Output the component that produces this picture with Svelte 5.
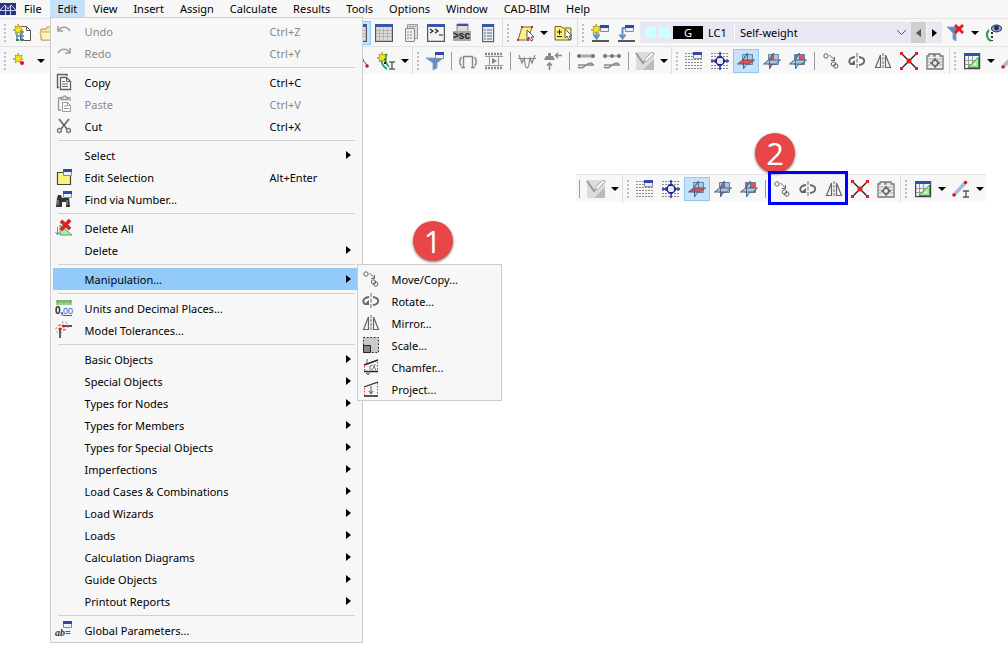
<script>
	const planes = (colors) =>
		`<path d="M5.500 2.500h10v10h-10z" fill="${colors[0]}" stroke="#5c86a6"/><path d="M6.500 7l4-6v10l-4 6z" fill="${colors[1]}" stroke="#4f7594"/><path d="M.500 12l5-4h12l-5 4z" fill="${colors[2]}" stroke="#4f6078"/><path d="M6.500 17V7l4-6" stroke="#4b6a80" fill="none"/>`;
	const blue = '#a9c9e2';
	const red = '#f04b50';
	const win = (x, y) =>
		`<path d="M${x}.5 ${y}.5h8v6h-8z" fill="#eef1f8" stroke="#8a8a94"/><path d="M${x} ${y}h9v3H${x}z" fill="#3346ac"/>`;
	const star = (x, y) =>
		`<g transform="translate(${x} ${y})"><path d="M5 0l1 3 3-1-1 3 2 1-3 1 1 3-3-2-3 2 1-3-3-1 3-1-1-3 3 1z" fill="#f7e51c" stroke="#a08d14" stroke-width=".7"/></g>`;
	const dots =
		'<path d="M0 1.500h18M0 4.500h18M0 7.500h18M0 10.500h18M0 13.500h18M0 16.500h18" stroke="#8a8a8a" stroke-dasharray="2 1"/>';

	const icons = {
		undo: '<path d="M3 4v5h5M3 9c3-5 9-5 12 0" stroke="#a0a0a0" stroke-width="1.6" fill="none"/>',
		redo: '<path d="M15 4v5h-5M15 9c-3-5-9-5-12 0" stroke="#a0a0a0" stroke-width="1.6" fill="none"/>',
		copy: '<path d="M12 3V1.500H2.500v13H4" fill="none" stroke="#606060" stroke-width="1.400"/><path d="M5.500 4.500h6l4 4v8h-10z" fill="#fff" stroke="#606060" stroke-width="1.300"/><path d="M11.500 4.500v4h4M7 8.500h3M7 11h6M7 13.500h6" stroke="#606060" fill="none"/>',
		paste: '<path d="M6 3H3.500v12H6M12 3h3v3M6 2.500h2c0-2 3-2 3 0h2v2H6z" fill="none" stroke="#999" stroke-width="1.300"/><path d="M7.500 7.500h5l3 3v6h-8z" fill="#fff" stroke="#999"/><path d="M12.500 7.500v3h3M9 11h3M9 13.500h5" stroke="#999" fill="none"/>',
		cut: '<path d="M4 2l8 10M14 2L6 12" stroke="#606060" stroke-width="1.500"/><circle cx="4.500" cy="13.500" r="2" fill="none" stroke="#777" stroke-width="1.400"/><circle cx="13.500" cy="13.500" r="2" fill="none" stroke="#777" stroke-width="1.400"/>',
		edit: `<path d="M2.500 4.500h13v12h-13z" fill="#fff27a" stroke="#484838" stroke-width="1.200"/>${win(8, 1)}`,
		find: `<path d="M3 5h3l1 3h3l1-1h3l1 10h-4v-5H7v5H1l1-9z" fill="#333"/><path d="M3 10v5M12 10v5" stroke="#a4b0b8"/>${win(8, 1)}`,
		deleteAll:
			'<path d="M5 6v10h12z" fill="#a8eca8" stroke="#5fa05f"/><path d="M2.500 8v7M.500 13l2 3 2-3" stroke="#718eb5" fill="none"/><path d="M6 2l9 8M15 1L6 11" stroke="#777" stroke-width="4"/><path d="M6 2l9 8M15 1L6 11" stroke="#f01818" stroke-width="2.800"/>',
		units: '<path d="M1 1h16v5H1z" fill="#91d17f"/><path d="M3 1v3M6 1v2M9 1v3M12 1v2M15 1v3" stroke="#437c3b"/><text x="0" y="15" font-size="10" font-weight="bold" font-family="Liberation Sans" fill="#222">0,</text><text x="8" y="15" font-size="9" font-family="Liberation Sans" fill="#2961d4">00</text><path d="M8 16.500h9" stroke="#2961d4"/>',
		tolerances:
			'<path d="M5 17V9M9 5h8" stroke="#222" stroke-width="1.400"/><circle cx="5" cy="8" r="4" fill="none" stroke="#777" stroke-dasharray="2 2"/><circle cx="9" cy="5" r="4" fill="none" stroke="#777" stroke-dasharray="2 2"/><circle cx="5" cy="8" r="1.600" fill="#e11"/><circle cx="8.500" cy="5" r="1.600" fill="#e11"/>',
		parameters: `${win(8, 0)}<text x="0" y="15" font-size="10" font-weight="bold" font-style="italic" font-family="Liberation Serif" fill="#333">ab=</text>`,
		move: '<circle cx="4" cy="4" r="2.200"/><circle cx="11.500" cy="12" r="2.200"/><circle cx="13.800" cy="14" r="2.200"/><path d="M7.500 3l5 5M12.500 5v3.500H9" />',
		rotate: '<path d="M9 1v16" stroke-dasharray="4 1.500"/><path d="M7 5C0 6 0 11 4 12.500M11 5c7 1 7 7 0 8" stroke-width="1.800"/><path d="M1.500 13H7V8z" fill="#666" stroke="none"/>',
		mirror: '<path d="M9 1v16" stroke-dasharray="3 1"/><path d="M6.500 3v12.500H1.500zM11.500 3v12.500h5z" stroke-width="1.200"/>',
		scale: '<path d="M1 1h16v16H1z" fill="#c9c9c9" stroke="none"/><path d="M1.500 1.500h15v15h-15z" stroke="#222" stroke-dasharray="1.500 2"/><path d="M1.500 9.500h7v7h-7z" fill="#888" stroke="#222"/>',
		chamfer: '<path d="M2 7l14-5M2 13.500h14" stroke="#222" stroke-width="1.400"/><path d="M2.500 8v5M15.500 4v9" stroke="#d33" stroke-dasharray="1.500 1.500"/><path d="M5 1v4M6 13v4M4 15l2 2 2-2M13 6c-2 8-6 6-5 3s3-3 6 3" stroke="#666"/>',
		project: '<path d="M2 7l14-5M2 16h14" stroke="#222" stroke-width="1.300"/><path d="M2.500 8v7M15.500 3v12" stroke="#d33" stroke-dasharray="1.500 1.500"/><path d="M9 6v8M7 11l2 3 2-3" stroke="#555"/>',
		newModel: `<path d="M7.500 2.500h6l4 4v10h-10z" fill="#fff" stroke="#555"/><path d="M13.500 2.500v4h4" fill="none" stroke="#555"/><path d="M4 7v10M9 7v10M3 8h8M3 12h8" stroke="#4d93bd" stroke-width="1.500"/><path d="M3 16h3M8 16h3" stroke="#2d8a4d" stroke-width="2"/>${star(0, 0)}`,
		open: '<path d="M2 16V5h5l1-2h9v13z" fill="#f7e9a5" stroke="#b59c4b"/><path d="M1 8h14l2 8H3z" fill="#fdf2bf" stroke="#c5ad62"/>',
		starDot: `${star(0, 1)}<circle cx="9" cy="11" r="2" fill="#e11"/>`,
		redDots: '<path d="M10 6l6 7" stroke="#555"/><circle cx="11" cy="8" r="1.800" fill="#e11"/><circle cx="16" cy="14" r="1.800" fill="#d11"/>',
		memberNew: `<path d="M4 4c0 6 2 11 6 13M10 2c-3 4-1 10 2 13" fill="none" stroke="#21a357" stroke-width="1.700"/><path d="M8 2v10" stroke="#222" stroke-width="2" stroke-dasharray="2 2"/>${star(0, 0)}<path d="M12 10h6M12 17h6M15 10v7" stroke="#666" stroke-width="1.500"/>`,
		table: '<path d="M.600.600h16.800v16.800H.600z" fill="#dedede" stroke="#555" stroke-width="1.200"/><path d="M0 0h18v3H0z" fill="#3b56a8"/><path d="M4.500 4v13M8.500 4v13M12.500 4v13M1 6.500h16M1 9.500h16M1 12.500h16" stroke="#b2b2b2"/>',
		sheet: '<path d="M6.500.500h10v14h-10z" fill="#ddd" stroke="#999"/><path d="M4.500 4.500h9v13h-9z" fill="#eee" stroke="#888"/><path d="M6 8h6M6 11h6M6 14h6M8 2.500h7" stroke="#888" stroke-dasharray="2 1"/>',
		console: '<path d="M.600.600h16.800v16.800H.600z" fill="#f3f3f3" stroke="#555" stroke-width="1.200"/><path d="M0 0h18v3H0z" fill="#3b56a8"/><path d="M3 5l3 2-3 2M8 5l3 2-3 2M12 11h4" fill="none" stroke="#222" stroke-width="1.200"/>',
		script: '<path d="M4 0h11v9H4z" fill="#ddd" stroke="#888"/><path d="M4 0h11v2H4z" fill="#3b56a8"/><path d="M0 7h18v10H0z" fill="#a6a6a6"/><text x="0" y="15" font-size="10" font-weight="bold" font-family="Liberation Sans" fill="#222">&gt;sc</text>',
		list: '<path d="M3.600.600h11v17h-11z" fill="#ececec" stroke="#666" stroke-width="1.200"/><path d="M3 0h12v3H3z" fill="#3b56a8"/><path d="M5 6h2M8 6h5M5 9h2M8 9h5M5 12h2M8 12h5M5 15h2M8 15h5" stroke="#476f9d"/>',
		surface: '<path d="M6 3h10l-4 13H2z" fill="#faf47c" stroke="#666"/><path d="M5 2h2v2H5zM15 2h2v2h-2zM1 15h2v2H1zM11 15h2v2h-2z" fill="#f01818"/><path d="M11 6v9l2-2 2 4 2-1-2-3h3z" fill="#fff" stroke="#555"/>',
		plusMinus: '<path d="M1 2.500h6l2 1.500h8v12H1z" fill="#fbef73" stroke="#6c682e"/><path d="M3 8h5M5.500 5.500v5M3 12.500h5" stroke="#222"/><path d="M11 5v9l2-2 2 4 2-1-2-3h3z" fill="#fff" stroke="#555"/>',
		loadNew: `<path d="M5.500 4v9M2.500 10.500l3 4 3-4" stroke="#5f92c8" stroke-width="2" fill="none"/><path d="M1 17h17" stroke="#222" stroke-width="1.500"/>${star(0, 0)}${win(9, 1)}`,
		load: `<path d="M5.500 4v9M2.500 10.500l3 4 3-4" stroke="#5f92c8" stroke-width="2" fill="none"/><path d="M5 4h4" stroke="#5f92c8" stroke-width="2"/><path d="M1 17h17" stroke="#222" stroke-width="1.500"/>${win(8, 1)}`,
		filterX: '<path d="M0 3h14l-5 6v8l-3-2V9z" fill="#5f88bf" stroke="#8aa3c3"/><path d="M8 1l8 8M16 1L8 9" stroke="#ef1515" stroke-width="2.800"/>',
		eye: '<path d="M4 6c-4 4-2 9 2 11" fill="none" stroke="#21a357" stroke-width="2"/><path d="M7 8v9" stroke="#333" stroke-width="2" stroke-dasharray="2 2"/><ellipse cx="11.500" cy="4.500" rx="5" ry="3.300" fill="#9ba9dd" stroke="#444" stroke-width="1.200"/><circle cx="11.500" cy="4" r="2.400" fill="#222c72"/>',
		filter: `<path d="M0 6h17l-6 5v5l-4 2v-7z" fill="#628dc6" stroke="#8ba7c8"/>${win(9, 0)}`,
		frame: '<path d="M4.500 16V4.500h9V16M2 15.500h4M12 15.500h4M2.500 5C0 8 1 12 2 14M15.500 5c2.500 3 1.500 7 .500 9" fill="none" stroke="#888" stroke-width="1.400"/>',
		film: '<path d="M0 2h18M0 16h18" stroke="#888" stroke-width="2.500" stroke-dasharray="2 1"/><path d="M0 4.500h18M0 13.500h18M4.500 4v10M13.500 4v10" stroke="#999"/><path d="M7 6l5 3-5 3z" fill="#888"/>',
		moment: '<path d="M0 6.500h18M1 3l3 8 2-5c1 5 1 10 3 10s2-5 3-10l2 5 3-8" fill="none" stroke="#888" stroke-width="1.200"/>',
		support: '<path d="M4 1h3v3h2l2 4H0l2-4h2z" fill="#888"/><path d="M12 3.500h6M14 1l-2.500 2.500L14 6M5.500 11v7M3 13.500L5.500 11 8 13.500" fill="none" stroke="#888" stroke-width="1.600"/>',
		beamA: '<path d="M1 4h16" stroke="#aaa" stroke-width="3"/><circle cx="2" cy="4" r="2" fill="#777"/><circle cx="16" cy="4" r="2" fill="#777"/><path d="M1 13h16M1 15c4 2 6 0 8-2s6-3 7 0" fill="none" stroke="#888" stroke-width="1.500"/>',
		beamB: '<path d="M1 4h16" stroke="#bbb" stroke-width="2"/><circle cx="2" cy="4" r="2" fill="#777"/><circle cx="9" cy="4" r="2" fill="#777"/><circle cx="16" cy="4" r="2" fill="#777"/><path d="M1 13h16M1 15c4 2 6 0 8-2s6-3 7 0" fill="none" stroke="#888" stroke-width="1.500"/>',
		check: '<path d="M0 0h18v18H0z" fill="#dcdcdc"/><path d="M18 7v11H7z" fill="#bbb"/><path d="M0 1l7 10L18 1" stroke="#999" stroke-width="2" fill="none"/><path d="M16 0l2 2-7 7-3 1 1-3z" fill="#f8f8f8" stroke="#aaa"/>',
		grid: `${dots}${win(8, 0)}`,
		snap: `${dots}<circle cx="9" cy="9" r="4" fill="#e8ecff" stroke="#141a8c" stroke-width="1.500"/><path d="M0 9h6M12 9h6M9 0v6M9 12v6" stroke="#141a8c" stroke-width="1.400"/>`,
		planeXY: planes([blue, blue, red]),
		planeXZ: planes([blue, red, blue]),
		planeYZ: planes([red, blue, blue]),
		cross: '<path d="M2 2l14 14M16 2L2 16" stroke="#222" stroke-width="1.400"/><circle cx="9" cy="9" r="2.500" fill="#f01818"/><path d="M0 0h3v3H0zM15 0h3v3h-3zM0 15h3v3H0zM15 15h3v3h-3z" fill="#f01818"/>',
		settings: '<path d="M1 4h2V2h5v2h1V2h5v2h3v13H1z" fill="#eee" stroke="#777" stroke-width="1.300"/><path d="M2 7h14M2 10h3M2 13h3M13 10h3M13 13h3" stroke="#aaa"/><circle cx="9" cy="11" r="2.800" fill="none" stroke="#666" stroke-width="1.700"/><path d="M9 6v2M9 14v2M4 11h2M12 11h2" stroke="#666" stroke-width="1.500"/>',
		tableGreen: '<path d="M1.600 1.600h15v15h-15z" fill="#f4f4f4" stroke="#444" stroke-width="1.200"/><path d="M1 1h16v3H1z" fill="#2855b0"/><path d="M5.500 4v12M9.500 4v12M2 8.500h14M2 12.500h14" stroke="#999"/><path d="M15.500 5v10.500H5z" fill="#98ef98" stroke="#4c8c4c"/><path d="M13 10.500v2.500h-2.500z" fill="#fff"/>',
		member: '<path d="M2 15L13 3" stroke="#a0bce0" stroke-width="3.500"/><circle cx="2" cy="15" r="1.800" fill="#e11"/><circle cx="13.500" cy="2.500" r="1.800" fill="#e11"/><path d="M11 11h6M11 17h6M14 11v6" stroke="#555" stroke-width="1.300"/>'
	};

	// toolbar entries: an icon name, or 'v' drop arrow, '|' line, '#' new group, '*' pressed button
	const coordTools = 'check v # grid snap *planeXY planeXZ planeYZ'.split(' ');
	const moveTools = ['move', 'rotate', 'mirror'];
	const tableTools = 'cross settings # tableGreen v member'.split(' ');

	const topTools =
		'*table table sheet console script list # surface v plusMinus # loadNew load'.split(' ');
	const lowTools =
		'redDots memberNew v # filter | frame film | moment support | beamA beamB |'.split(' ');

	const menus = [
		'File', 'Edit', 'View', 'Insert', 'Assign', 'Calculate',
		'Results', 'Tools', 'Options', 'Window', 'CAD-BIM', 'Help'
	];

	const submenu = [
		{ label: 'Move/Copy...', icon: 'move' },
		{ label: 'Rotate...', icon: 'rotate' },
		{ label: 'Mirror...', icon: 'mirror' },
		{ label: 'Scale...', icon: 'scale' },
		{ label: 'Chamfer...', icon: 'chamfer' },
		{ label: 'Project...', icon: 'project' }
	];

	const more = (label) => ({ label, more: true });
	const editMenu = [
		[
			{ label: 'Undo', icon: 'undo', keys: 'Ctrl+Z', off: true },
			{ label: 'Redo', icon: 'redo', keys: 'Ctrl+Y', off: true }
		],
		[
			{ label: 'Copy', icon: 'copy', keys: 'Ctrl+C' },
			{ label: 'Paste', icon: 'paste', keys: 'Ctrl+V', off: true },
			{ label: 'Cut', icon: 'cut', keys: 'Ctrl+X' }
		],
		[
			more('Select'),
			{ label: 'Edit Selection', icon: 'edit', keys: 'Alt+Enter' },
			{ label: 'Find via Number...', icon: 'find' }
		],
		[{ label: 'Delete All', icon: 'deleteAll' }, more('Delete')],
		[{ label: 'Manipulation...', more: true, items: submenu }],
		[
			{ label: 'Units and Decimal Places...', icon: 'units' },
			{ label: 'Model Tolerances...', icon: 'tolerances' }
		],
		[
			'Basic Objects', 'Special Objects', 'Types for Nodes', 'Types for Members',
			'Types for Special Objects', 'Imperfections', 'Load Cases & Combinations',
			'Load Wizards', 'Loads', 'Calculation Diagrams', 'Guide Objects', 'Printout Reports'
		].map(more),
		[{ label: 'Global Parameters...', icon: 'parameters' }]
	];

	let loadCase = $state('Self-weight');
</script>

{#snippet icon(name)}
	<svg class="icon" viewBox="0 0 18 18" fill="none" stroke={submenu.some((s) => s.icon === name) ? '#666' : 'none'}>
		{@html icons[name] ?? ''}
	</svg>
{/snippet}

{#snippet tools(list)}
	{#each list as item}
		{#if item === 'v'}
			<button class="drop" aria-label="More"><svg viewBox="0 0 8 4"><path d="M0 0h8L4 4z" /></svg></button>
		{:else if item === '|'}
			<span class="line"></span>
		{:else if item === '#'}
			<span class="group"></span>
		{:else}
			<button class="tool" class:on={item[0] === '*'} aria-label={item.replace('*', '')}>
				{@render icon(item.replace('*', ''))}
			</button>
		{/if}
	{/each}
{/snippet}

{#snippet entry(item)}
	<li>
		<button class="item" class:open={item.items} disabled={item.off}>
			<span class="pic">{#if item.icon}{@render icon(item.icon)}{/if}</span>
			<span class="label">{item.label}</span>
			{#if item.keys}<span class="keys">{item.keys}</span>{/if}
			{#if item.more}<svg class="more" viewBox="0 0 5 8"><path d="M0 0l5 4-5 4z" /></svg>{/if}
		</button>
		{#if item.items}
			<ul class="menu sub">
				{#each item.items as child}{@render entry(child)}{/each}
			</ul>
		{/if}
	</li>
{/snippet}

<div class="window">
	<header>
		<nav>
			<svg class="logo" viewBox="0 0 16 12">
				<path d="M0 0h16v12H0z" fill="#2b3480" />
				<path d="M0 7.500h16M5.500 2v10M10.500 2v10M0 7l5-5 3 4 3-4 5 5" fill="none" stroke="#c9cfe8" />
			</svg>
			<ul class="bar">
				{#each menus as name}
					<li>
						<button class="name" class:active={name === 'Edit'}>{name}</button>
						{#if name === 'Edit'}
							<div class="menu edit">
								{#each editMenu as section}
									<ul class="section">
										{#each section as item}{@render entry(item)}{/each}
									</ul>
								{/each}
								<span class="badge first">1</span>
							</div>
						{/if}
					</li>
				{/each}
			</ul>
		</nav>

		<div class="toolbar loads">
			<span class="grip"></span>
			{@render tools(['newModel', 'open'])}
			<span class="space top"></span>
			{@render tools(topTools)}
			<div class="case">
				<span class="swatch"></span>
				<span class="swatch"></span>
				<span class="type">G</span>
				<label for="loadCase">LC1</label>
				<select id="loadCase" bind:value={loadCase}>
					<option>Self-weight</option>
				</select>
				<svg class="chevron" viewBox="0 0 9 5"><path d="M0 0l4.500 4.500L9 0" /></svg>
			</div>
			<button class="step prev" aria-label="Previous"><svg viewBox="0 0 5 8"><path d="M5 0v8L0 4z" /></svg></button>
			<button class="step" aria-label="Next"><svg viewBox="0 0 5 8"><path d="M0 0l5 4-5 4z" /></svg></button>
			{@render tools(['filterX', 'v', 'eye'])}
		</div>

		<div class="toolbar">
			<span class="grip"></span>
			{@render tools(['starDot', 'v'])}
			<span class="space low"></span>
			{@render tools([...lowTools, ...coordTools, '|', ...moveTools, ...tableTools])}
		</div>
	</header>

	<main>
		<div class="toolbar detail">
			{@render tools(['|', ...coordTools, '|'])}
			<div class="marked">
				{@render tools(moveTools)}
				<span class="badge second">2</span>
			</div>
			{@render tools([...tableTools, 'v'])}
		</div>
	</main>
</div>

<style>
	:global(body) {
		background: #fff;
		color: #000;
		font-family: 'Noto Sans', 'Open Sans', sans-serif;
		font-size: 11px;
	}
	button,
	select {
		margin: 0;
		padding: 0;
		border: 0;
		background: none;
		color: inherit;
		font: inherit;
	}
	ul {
		list-style: none;
		margin: 0;
		padding: 0;
	}
	.window {
		min-height: 100vh;
	}
	nav {
		display: flex;
		align-items: center;
		height: 18px;
		background: #f7f7f7;
	}
	.logo {
		width: 16px;
		height: 12px;
	}
	.bar {
		display: flex;
		align-self: start;
	}
	.bar > li {
		position: relative;
	}
	.name {
		height: 17px;
		padding: 0 8px;
		display: block;
		white-space: nowrap;
	}
	.name.active {
		background: #c7e2f8;
	}
	.icon {
		width: 18px;
		height: 18px;
		display: block;
		overflow: visible;
	}
	.toolbar {
		display: flex;
		align-items: center;
		box-sizing: border-box;
		height: 28px;
		background: #f7f7f7;
		border-top: 1px solid #e4e4e4;
		overflow: hidden;
	}
	.toolbar > * {
		flex-shrink: 0;
	}
	.loads {
		padding-right: 1px;
	}
	.tool {
		display: grid;
		place-items: center;
		box-sizing: border-box;
		width: 26px;
		height: 24px;
		border: 1px solid transparent;
	}
	.tool.on {
		background: #c7e2f8;
		border-color: #90c8f6;
	}
	.drop {
		display: grid;
		place-items: center;
		width: 12px;
		height: 24px;
	}
	.drop svg {
		width: 8px;
		height: 4px;
	}
	.line {
		box-sizing: border-box;
		width: 4px;
		height: 18px;
		margin-left: 3px;
		border-left: 1px solid #999;
	}
	.group,
	.grip {
		display: flex;
		box-sizing: border-box;
		width: 10px;
		height: 28px;
		margin-left: 1px;
		padding-left: 4px;
		align-items: center;
		border-left: 1px solid #ddd;
	}
	.grip {
		width: 9px;
		margin: 0;
		border: 0;
	}
	.group::before,
	.grip::before {
		content: '';
		width: 2px;
		height: 18px;
		background: repeating-linear-gradient(#c0c0c0 0 2px, transparent 2px 4px);
	}
	.space.top {
		width: 284px;
	}
	.space.low {
		width: 300px;
	}
	.case {
		display: flex;
		flex: 1 1 200px;
		align-items: center;
		height: 21px;
		margin-left: 1px;
		padding-left: 5px;
		gap: 3px;
		background: #e8e8f3;
	}
	.swatch {
		width: 11px;
		height: 11px;
		background: #ccffff;
	}
	.type {
		width: 30px;
		line-height: 13px;
		background: #000;
		color: #fff;
		text-align: center;
	}
	.case label {
		width: 26px;
		margin-left: 2px;
		line-height: 15px;
		border-right: 1px solid #fff;
	}
	.case select {
		flex: 1;
		min-width: 0;
		padding-left: 2px;
		appearance: none;
	}
	.chevron {
		width: 9px;
		height: 5px;
		margin-right: 5px;
		fill: none;
		stroke: #555;
	}
	.step {
		display: grid;
		place-items: center;
		width: 15px;
		height: 21px;
		margin-right: 1px;
		background: #e8e8f3;
	}
	.step.prev {
		background: #cfcfcf;
		color: #555;
	}
	.step svg {
		width: 5px;
		height: 8px;
		fill: currentColor;
	}
	.menu {
		position: absolute;
		z-index: 1;
		box-sizing: border-box;
		background: #f7f7f7;
		border: 1px solid #ccc;
	}
	.edit {
		top: 17px;
		left: 0;
		width: 313px;
		padding: 2px 2px 1px;
	}
	.sub {
		top: -4px;
		left: 304px;
		width: 145px;
		padding: 3px 2px 0;
	}
	.section + .section::before {
		content: '';
		display: block;
		height: 1px;
		margin: 3px 5px;
		background: #d0d0d0;
	}
	.menu li {
		position: relative;
	}
	.item {
		display: flex;
		align-items: center;
		width: 100%;
		height: 22px;
		padding: 0 9px 0 2px;
		text-align: left;
		white-space: nowrap;
	}
	.item:disabled {
		color: #888;
	}
	.item.open {
		background: #92caf9;
	}
	.pic {
		width: 30px;
	}
	.label {
		flex: 1;
	}
	.keys {
		width: 81px;
	}
	.more {
		width: 5px;
		height: 8px;
	}
	main {
		padding: 100px 22px 0 0;
	}
	.detail {
		width: max-content;
		margin-left: auto;
		overflow: visible;
	}
	.marked {
		position: relative;
		display: flex;
	}
	.marked::after {
		content: '';
		position: absolute;
		inset: -6px -1px -4px;
		border: 3px solid #0000ff;
		pointer-events: none;
	}
	.badge {
		position: absolute;
		width: 40px;
		height: 40px;
		border-radius: 50%;
		background: #e84749;
		box-shadow: 0 1px 3px #0008;
		color: #fff;
		font: 31px/40px 'Open Sans', sans-serif;
		text-align: center;
	}
	.first {
		top: 203px;
		left: 362px;
	}
	.second {
		top: -44px;
		left: -14px;
	}
</style>
